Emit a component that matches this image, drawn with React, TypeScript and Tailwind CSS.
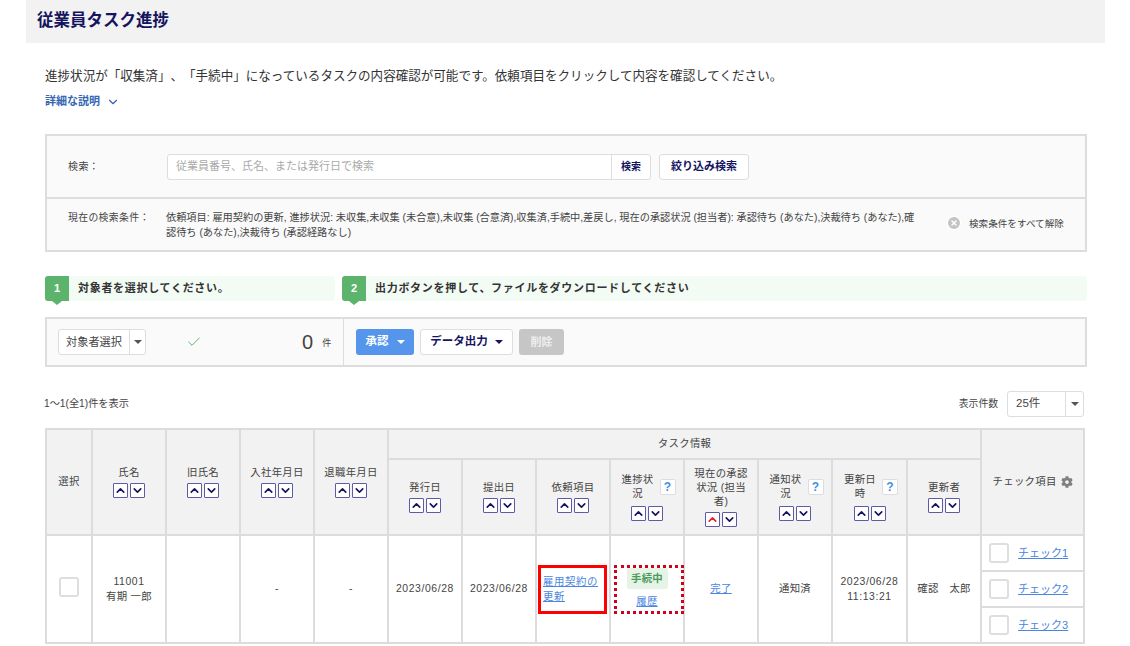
import { Check, ChevronDown, ChevronUp, CircleX } from 'lucide-react';
import { FaCog } from 'react-icons/fa';

const FONT = "font-['Liberation_Sans','Noto_Sans_CJK_JP',sans-serif]";

function SortButtons({ activeUp = false }: { activeUp?: boolean }) {
    return (
        <div className="flex justify-center gap-[2px]">
            <span className="flex h-[15px] w-[15px] items-center justify-center rounded-[1px] border border-[#5d5aa8] bg-white">
                <ChevronUp className={activeUp ? 'h-[13px] w-[13px] text-[#e0222e]' : 'h-[13px] w-[13px] text-[#14145f]'} strokeWidth={3} />
            </span>
            <span className="flex h-[15px] w-[15px] items-center justify-center rounded-[1px] border border-[#5d5aa8] bg-white">
                <ChevronDown className="h-[13px] w-[13px] text-[#14145f]" strokeWidth={3} />
            </span>
        </div>
    );
}

function Help() {
    return (
        <span className="flex h-[16px] w-[16px] shrink-0 items-center justify-center rounded-[2px] border border-[#dddddd] bg-white text-[12px] font-bold text-[#3f8fe8]">
            ?
        </span>
    );
}

function HeadCell({ label, rowSpan, help, activeUp }: { label: string; rowSpan?: number; help?: boolean; activeUp?: boolean }) {
    return (
        <th rowSpan={rowSpan} className="border-2 border-[#dcdcdc] bg-[#f2f2f2] px-[4px] align-middle font-normal">
            {help ? (
                <div className="mb-[5px] flex items-center justify-center gap-[3px]">
                    <span className="w-[38px] text-center leading-[14px]">{label}</span>
                    <Help />
                </div>
            ) : (
                <div className="mb-[3px] leading-[14px]">{label}</div>
            )}
            <SortButtons activeUp={activeUp} />
        </th>
    );
}

function Checkbox() {
    return <span className="inline-block h-[20px] w-[20px] rounded-[3px] border-2 border-[#dedede] bg-white" />;
}

function Caret({ color }: { color: string }) {
    return <span className={`h-0 w-0 border-x-[4px] border-t-[4px] border-x-transparent ${color}`} />;
}

function CheckRow({ n, last }: { n: number; last?: boolean }) {
    return (
        <div className={last ? 'flex h-[34px] items-center gap-[9px] pl-[7px]' : 'flex h-[36px] items-center gap-[9px] border-b-2 border-[#dcdcdc] pl-[7px]'}>
            <Checkbox />
            <a className="text-[11px] tracking-normal text-[#4a86e0] underline">チェック{n}</a>
        </div>
    );
}

function Step({ n, text, className }: { n: number; text: string; className: string }) {
    return (
        <div className={`flex h-[25px] items-center rounded-[3px] bg-[#f2fbf4] ${className}`}>
            <span className="relative flex h-[25px] w-[24px] shrink-0 items-center justify-center rounded-l-[3px] bg-[#5cb46c] text-[11px] font-bold text-white">
                {n}
                <span className="absolute left-[7px] top-[25px] h-0 w-0 border-x-[5px] border-t-[4px] border-x-transparent border-t-[#5cb46c]" />
            </span>
            <span className="ml-[9px] text-[11px] font-bold tracking-[0.7px] text-[#333333]">{text}</span>
        </div>
    );
}

const cell = 'border-2 border-[#dcdcdc] bg-white text-center align-middle';

export default function App() {
    return (
        <div className={`${FONT} h-[646px] w-[1130px] overflow-hidden bg-white text-[#444444] [text-spacing-trim:space-all]`}>
            {/* Title */}
            <div className="mx-[26px] flex h-[43px] w-[1079px] items-center bg-[#f2f2f2] pb-[3px] pl-[11px]">
                <h1 className="text-[16.5px] font-bold text-[#14145f]">従業員タスク進捗</h1>
            </div>

            <div className="ml-[45px] w-[1042px]">
                <p className="mt-[25px] text-[12.55px] leading-[16px] text-[#333333]">
                    進捗状況が「収集済」、「手続中」になっているタスクの内容確認が可能です。依頼項目をクリックして内容を確認してください。
                </p>
                <div className="mt-[10px] flex h-[15px] items-center gap-[6px] text-[11px] font-bold text-[#3566b4]">
                    詳細な説明 <ChevronDown className="h-[14px] w-[14px]" strokeWidth={2} />
                </div>

                {/* Search */}
                <div className="mt-[25px] border-2 border-[#dddddd] bg-[#fafafa]">
                    <div className="flex h-[63px] items-center border-b-2 border-[#dddddd] pl-[21px]">
                        <span className="w-[99px] text-[10px] tracking-[0.4px]">検索：</span>
                        <div className="flex h-[26px] w-[484px] items-center rounded-[3px] border border-[#dddddd] bg-white text-[11px]">
                            <span className="flex-1 pl-[8px] text-[#aaaaaa]">従業員番号、氏名、または発行日で検索</span>
                            <span className="flex h-full w-[39px] items-center justify-center border-l border-[#dddddd] text-[10px] font-bold text-[#14145f]">検索</span>
                        </div>
                        <span className="ml-[8px] flex h-[26px] w-[90px] items-center justify-center rounded-[3px] border border-[#dddddd] bg-white text-[11px] font-bold text-[#14145f]">
                            絞り込み検索
                        </span>
                    </div>
                    <div className="flex h-[51px] pl-[21px] pt-[11px] text-[10.2px] leading-[15px]">
                        <span className="w-[98px] shrink-0 text-[9.8px] tracking-[0.4px]">現在の検索条件：</span>
                        <p className="w-[757px]">
                            依頼項目: 雇用契約の更新, 進捗状況: 未収集,未収集 (未合意),未収集 (合意済),収集済,手続中,差戻し, 現在の承認状況 (担当者): 承認待ち (あなた),決裁待ち (あなた),確認待ち (あなた),決裁待ち (承認経路なし)
                        </p>
                        <div className="ml-[23px] mt-[6px] flex h-[14px] items-center gap-[7px]">
                            <CircleX className="h-[16px] w-[16px] fill-[#c4c4c4] text-white" strokeWidth={2} />
                            <span className="text-[9.6px]">検索条件をすべて解除</span>
                        </div>
                    </div>
                </div>

                {/* Steps */}
                <div className="mt-[24px] flex">
                    <Step n={1} text="対象者を選択してください。" className="w-[290px]" />
                    <Step n={2} text="出力ボタンを押して、ファイルをダウンロードしてください" className="ml-[7px] w-[745px]" />
                </div>

                {/* Actions */}
                <div className="mt-[16px] flex h-[50px] items-center border-2 border-[#dddddd] bg-[#fafafa]">
                    <div className="flex h-full w-[297px] items-center border-r border-[#dddddd] pl-[11px]">
                        <span className="flex h-[26px] w-[88px] items-center rounded-[3px] border border-[#dddddd] bg-white text-[11.2px]">
                            <span className="w-[70px] text-center">対象者選択</span>
                            <span className="flex h-full flex-1 items-center justify-center border-l border-[#dddddd]">
                                <Caret color="border-t-[#555555]" />
                            </span>
                        </span>
                        <Check className="ml-[40px] h-[16px] w-[16px] text-[#5cb46c]" strokeWidth={1.5} />
                        <span className="ml-[100px] text-[20px] leading-none">0</span>
                        <span className="ml-[9px] mt-[4px] text-[9px]">件</span>
                    </div>
                    <div className="flex items-center pl-[12px]">
                        <span className="flex h-[26px] w-[58px] items-center justify-center gap-[8px] rounded-[3px] bg-[#5596ec] text-[11.5px] font-bold text-white">
                            承認 <Caret color="border-t-white" />
                        </span>
                        <span className="ml-[6px] flex h-[26px] w-[93px] items-center justify-center gap-[7px] rounded-[3px] border border-[#dddddd] bg-white text-[11.5px] font-bold text-[#14145f]">
                            データ出力 <Caret color="border-t-[#14145f]" />
                        </span>
                        <span className="ml-[6px] flex h-[26px] w-[45px] items-center justify-center rounded-[3px] bg-[#c6c6c6] text-[11px] font-bold text-[#eeeeee]">
                            削除
                        </span>
                    </div>
                </div>

                {/* Paging */}
                <div className="-ml-[1px] mt-[24px] flex h-[26px] items-center justify-between pr-[3px]">
                    <span className="text-[10.2px]">1～1(全1)件を表示</span>
                    <div className="flex items-center gap-[9px]">
                        <span className="text-[9.8px]">表示件数</span>
                        <span className="flex h-[26px] w-[77px] items-center rounded-[3px] border border-[#dddddd] bg-white text-[11.5px]">
                            <span className="flex-1 pl-[8px]">25件</span>
                            <span className="flex h-full w-[18px] items-center justify-center border-l border-[#dddddd]">
                                <Caret color="border-t-[#555555]" />
                            </span>
                        </span>
                    </div>
                </div>
            </div>

            {/* Table */}
            <table className="ml-[45px] mt-[11px] w-[1038px] table-fixed border-collapse text-[10.4px] tracking-[0.3px]">
                <colgroup>
                    <col className="w-[46px]" />
                    <col className="w-[74px]" />
                    <col className="w-[74px]" />
                    <col className="w-[74px]" />
                    <col className="w-[74px]" />
                    <col className="w-[74px]" />
                    <col className="w-[74px]" />
                    <col className="w-[74px]" />
                    <col className="w-[74px]" />
                    <col className="w-[74px]" />
                    <col className="w-[74px]" />
                    <col className="w-[75px]" />
                    <col className="w-[74px]" />
                    <col className="w-[103px]" />
                </colgroup>
                <thead>
                    <tr className="h-[30px]">
                        <th rowSpan={2} className="border-2 border-[#dcdcdc] bg-[#f2f2f2] align-middle font-normal">選択</th>
                        <HeadCell label="氏名" rowSpan={2} />
                        <HeadCell label="旧氏名" rowSpan={2} />
                        <HeadCell label="入社年月日" rowSpan={2} />
                        <HeadCell label="退職年月日" rowSpan={2} />
                        <th colSpan={8} className="border-2 border-[#dcdcdc] bg-[#f2f2f2] font-normal">タスク情報</th>
                        <th rowSpan={2} className="border-2 border-[#dcdcdc] bg-[#f2f2f2] align-middle font-normal">
                            <span className="flex items-center justify-center gap-[4px]">
                                チェック項目 <FaCog className="h-[12px] w-[12px] text-[#808080]" />
                            </span>
                        </th>
                    </tr>
                    <tr className="h-[76px]">
                        <HeadCell label="発行日" />
                        <HeadCell label="提出日" />
                        <HeadCell label="依頼項目" />
                        <HeadCell label="進捗状況" help />
                        <HeadCell label="現在の承認状況 (担当者)" activeUp />
                        <HeadCell label="通知状況" help />
                        <HeadCell label="更新日時" help />
                        <HeadCell label="更新者" />
                    </tr>
                </thead>
                <tbody>
                    <tr className="h-[106px]">
                        <td className={cell}><Checkbox /></td>
                        <td className={`${cell} leading-[15px]`}><span className="tracking-[0.6px]">11001</span><br />有期 一郎</td>
                        <td className={cell} />
                        <td className={cell}>-</td>
                        <td className={cell}>-</td>
                        <td className={`${cell} tracking-[0.6px]`}>2023/06/28</td>
                        <td className={`${cell} tracking-[0.6px]`}>2023/06/28</td>
                        <td className={`${cell} relative`}>
                            <a className="mx-auto block w-[60px] text-left leading-[15px] tracking-[0.6px] text-[#4a86e0] underline">雇用契約の更新</a>
                            <span className="absolute left-[1px] top-[29px] h-[49px] w-[69px] border-[3px] border-[#ff0000]" />
                        </td>
                        <td className={`${cell} relative`}>
                            <span className="mx-auto mb-[5px] flex h-[21px] w-[41px] items-center justify-center rounded-[2px] bg-[#e6f4e8] font-bold text-[#4a9a5a]">手続中</span>
                            <a className="text-[#4a86e0] underline">履歴</a>
                            <span className="absolute left-[3px] top-[29px] h-[49px] w-[70px] border-[3px] border-dotted border-[#d0021b]" />
                        </td>
                        <td className={cell}><a className="text-[#4a86e0] underline">完了</a></td>
                        <td className={cell}>通知済</td>
                        <td className={`${cell} leading-[15px] tracking-[0.6px]`}>2023/06/28<br />11:13:21</td>
                        <td className={cell}>確認　太郎</td>
                        <td className="border-2 border-[#dcdcdc] bg-white p-0 text-left align-top">
                            <CheckRow n={1} />
                            <CheckRow n={2} />
                            <CheckRow n={3} last />
                        </td>
                    </tr>
                </tbody>
            </table>
        </div>
    );
}
